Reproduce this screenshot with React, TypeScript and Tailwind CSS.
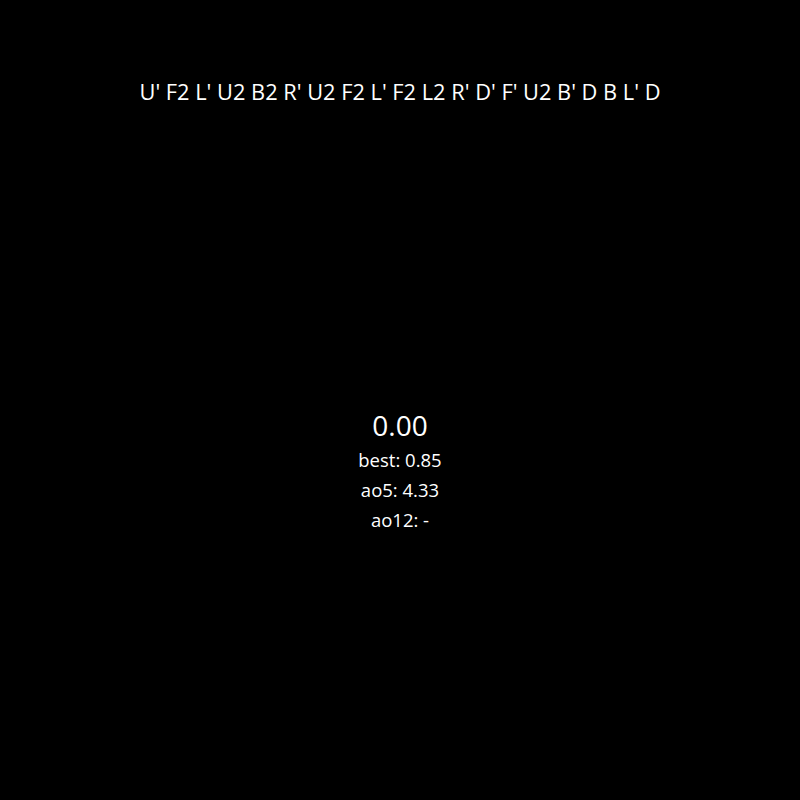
export default function App() {
  const scramble = "U' F2 L' U2 B2 R' U2 F2 L' F2 L2 R' D' F' U2 B' D B L' D"

  return (
    <div
      className="h-screen w-full bg-black text-white flex flex-col items-center"
      style={{ fontFamily: '"Open Sans", "Noto Sans", sans-serif' }}
    >
      <div className="pt-[77px] text-[21.8px] leading-[30px] text-center">{scramble}</div>
      <div className="flex flex-col items-center mt-[299px]">
        <div className="text-[28px] leading-[39px]">0.00</div>
        <div className="text-[18.5px] leading-[30px]">best: 0.85</div>
        <div className="text-[18.5px] leading-[30px]">ao5: 4.33</div>
        <div className="text-[18.5px] leading-[30px]">ao12: -</div>
      </div>
    </div>
  )
}
